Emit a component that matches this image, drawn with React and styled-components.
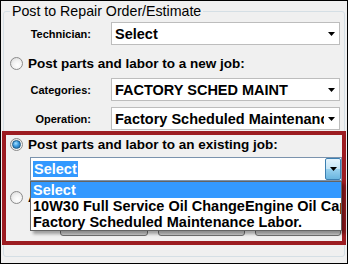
import React from 'react';
import styled, { createGlobalStyle } from 'styled-components';

const GlobalStyle = createGlobalStyle`
  html, body { margin: 0; padding: 0; background: #f0f0f0; }
  body { font-family: "Liberation Sans", Arial, sans-serif; color: #000; }
  * { box-sizing: border-box; }
`;

const Window = styled.div`
  width: 348px;
  height: 264px;
  border: 1px solid #000;
  background: #f0f0f0;
  padding: 2px 2px 0 2px;
  overflow: hidden;
`;

const GroupBox = styled.fieldset`
  margin: 0;
  padding: 0 0 11px 0;
  border: 1px solid #d5dfe5;
  border-radius: 3px;
  min-width: 0;
`;

const Legend = styled.legend`
  margin-left: 6px;
  padding: 0 2px;
  font-size: 14.2px;
  line-height: 16px;
  font-weight: normal;
`;

const FieldRow = styled.div`
  display: grid;
  grid-template-columns: 87px 229px;
  column-gap: 20px;
  align-items: center;
  margin-top: ${p => p.$top}px;
`;

const Label = styled.div`
  text-align: right;
  font-size: 11px;
  font-weight: bold;
`;

const Combo = styled.div`
  height: 23px;
  border: 1px solid #bdbdbd;
  background: #fff;
  display: flex;
  align-items: center;
  gap: 4px;
  padding: 0 4px 0 3px;
`;

const ComboText = styled.div`
  flex: 1;
  min-width: 0;
  overflow: hidden;
  white-space: nowrap;
  font-size: 14.5px;
  font-weight: bold;
  line-height: 16px;
`;

const Arrow = () => (
  <svg width="7" height="4" viewBox="0 0 7 4" style={{ flex: 'none' }}>
    <polygon points="0,0 7,0 3.5,4" fill="#000" />
  </svg>
);

const RadioRow = styled.div`
  display: flex;
  align-items: center;
  gap: 5px;
  height: 16px;
  margin: ${p => p.$top}px 0 0 ${p => p.$left}px;
`;

const RadioCircle = styled.span`
  flex: none;
  width: 13px;
  height: 13px;
  border-radius: 50%;
  border: 1px solid #8b8b8b;
  background: radial-gradient(circle at 60% 65%, #ffffff 0%, #f2f2f2 45%, #d4d4d4 100%);
  display: flex;
  align-items: center;
  justify-content: center;
  &::after {
    content: '';
    display: ${p => (p.$checked ? 'block' : 'none')};
    width: 7px;
    height: 7px;
    border-radius: 50%;
    border: 1px solid #1d5b86;
    background: radial-gradient(circle at 40% 35%, #a6e0ff 0%, #3b9be0 45%, #1c5e93 100%);
  }
`;

const RadioText = styled.span`
  font-size: 13.5px;
  font-weight: bold;
  white-space: nowrap;
`;

const Highlight = styled.div`
  margin: 1px -2px 0 -2px;
  border: 4px solid #9c1c21;
  padding: 1px 0 5px 0;
`;

const ComboWrap = styled.div`
  position: relative;
  margin: 5px 0 0 24px;
`;

const FocusCombo = styled.div`
  height: 24px;
  border: 1px solid #7b93ad;
  background: #fff;
  display: flex;
  align-items: center;
  padding-left: 2px;
`;

const Selected = styled.span`
  background: #3399ff;
  color: #fff;
  font-size: 14.5px;
  font-weight: bold;
  line-height: 16px;
  padding: 0 1px;
`;

const DropButton = styled.div`
  margin-left: auto;
  width: 16px;
  height: 22px;
  border: 1px solid #3c7fb1;
  border-radius: 2px;
  background: linear-gradient(#e5f4fc 0%, #c4e5f6 50%, #98d1ef 51%, #6ab6e0 100%);
  display: flex;
  align-items: center;
  justify-content: center;
`;

const List = styled.div`
  position: absolute;
  top: 100%;
  left: 0;
  right: 0;
  z-index: 2;
  background: #fff;
  border: 1px solid #646464;
  box-shadow: 3px 3px 3px rgba(0, 0, 0, 0.35);
`;

const Item = styled.div`
  height: 16px;
  line-height: 16px;
  padding-left: 2px;
  font-size: 14.5px;
  font-weight: bold;
  white-space: nowrap;
  overflow: hidden;
  background: ${p => (p.$active ? '#3399ff' : 'transparent')};
  color: ${p => (p.$active ? '#fff' : '#000')};
`;

const ButtonRow = styled.div`
  display: flex;
  gap: 10px;
  margin: 8px 0 0 54px;
`;

const Button = styled.div`
  width: ${p => p.$w}px;
  height: 23px;
  border: 1px solid #707070;
  border-radius: 3px;
  background: linear-gradient(#f2f2f2 0%, #ebebeb 50%, #dddddd 51%, #cfcfcf 100%);
`;

export default function App() {
  return (
    <>
      <GlobalStyle />
      <Window>
        <GroupBox>
          <Legend>Post to Repair Order/Estimate</Legend>
          <FieldRow $top={3}>
            <Label>Technician:</Label>
            <Combo>
              <ComboText>Select</ComboText>
              <Arrow />
            </Combo>
          </FieldRow>
          <RadioRow $top={10} $left={6}>
            <RadioCircle />
            <RadioText>Post parts and labor to a new job:</RadioText>
          </RadioRow>
          <FieldRow $top={7}>
            <Label>Categories:</Label>
            <Combo>
              <ComboText>FACTORY SCHED MAINT</ComboText>
              <Arrow />
            </Combo>
          </FieldRow>
          <FieldRow $top={6}>
            <Label>Operation:</Label>
            <Combo>
              <ComboText>Factory Scheduled Maintenance</ComboText>
              <Arrow />
            </Combo>
          </FieldRow>
          <Highlight>
            <RadioRow $top={0} $left={4}>
              <RadioCircle $checked />
              <RadioText>Post parts and labor to an existing job:</RadioText>
            </RadioRow>
            <ComboWrap>
              <FocusCombo>
                <Selected>Select</Selected>
                <DropButton>
                  <Arrow />
                </DropButton>
              </FocusCombo>
              <List>
                <Item $active>Select</Item>
                <Item>10W30 Full Service Oil ChangeEngine Oil Capacity</Item>
                <Item>Factory Scheduled Maintenance Labor.</Item>
              </List>
            </ComboWrap>
            <RadioRow $top={8} $left={4}>
              <RadioCircle />
              <RadioText>A</RadioText>
            </RadioRow>
            <ButtonRow>
              <Button $w={88} />
              <Button $w={87} />
              <Button $w={86} />
            </ButtonRow>
          </Highlight>
        </GroupBox>
      </Window>
    </>
  );
}
